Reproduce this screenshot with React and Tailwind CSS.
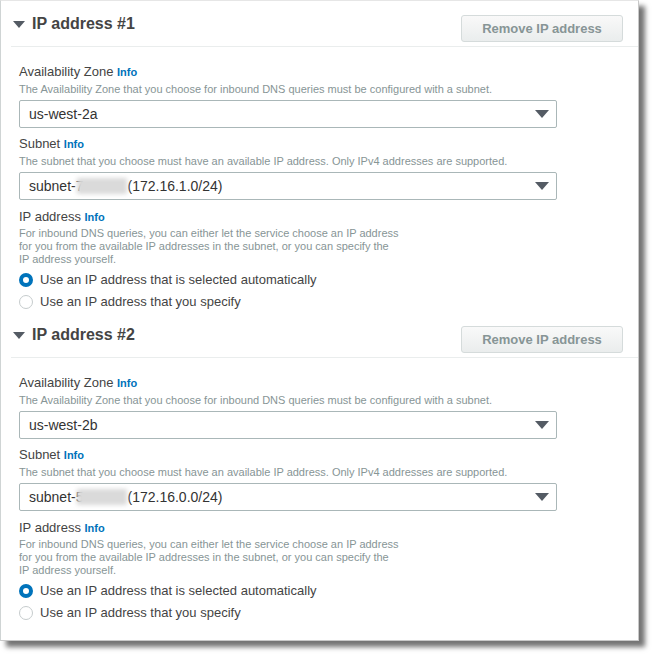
import React from "react";

const font = { fontFamily: '"Liberation Sans", Arial, sans-serif' };

function Caret({ className }) {
  return (
    <svg width="14" height="8" viewBox="0 0 14 8" className={className}>
      <path d="M0 0 L14 0 L7 8 Z" fill="#545b64" />
    </svg>
  );
}

function Radio({ checked, label }) {
  return (
    <div className="flex items-center h-[22px]">
      {checked ? (
        <span className="w-[14px] h-[14px] rounded-full border-[4px] border-[#0073bb] bg-white box-border" />
      ) : (
        <span className="w-[14px] h-[14px] rounded-full border border-[#c6cccd] bg-white box-border" />
      )}
      <span className="ml-[7px] text-[13px] text-[#444]">{label}</span>
    </div>
  );
}

function Label({ text }) {
  return (
    <div className="text-[13px] leading-[16px] text-[#444]">
      {text} <span className="text-[11px] font-bold text-[#0073bb]">Info</span>
    </div>
  );
}

function Desc({ children }) {
  return <div className="text-[11px] leading-[13px] text-[#879596]">{children}</div>;
}

function Select({ children }) {
  return (
    <div className="w-[538px] h-[28px] border border-[#aab7b8] rounded-[2px] flex items-center justify-between pl-[9px] pr-[7px] bg-white">
      <span className="text-[14px] text-[#333] flex items-center">{children}</span>
      <Caret />
    </div>
  );
}

function Section({ n, az, subnetPrefix, cidr, first }) {
  return (
    <div>
      <div className={"flex items-start justify-between pl-[12px] pr-[15px] " + (first ? "pt-[14px]" : "pt-[13px]")}>
        <div className="flex items-center h-[18px]">
          <svg width="12" height="7" viewBox="0 0 12 7">
            <path d="M0 0 L12 0 L6 7 Z" fill="#545b64" />
          </svg>
          <span className="ml-[7px] text-[16px] leading-[18px] font-bold text-[#444]">IP address #{n}</span>
        </div>
        <div className="w-[162px] h-[27px] rounded-[3px] border border-[#d5dbdb] bg-gradient-to-b from-[#f9f9f9] to-[#eaeded] flex items-center justify-center text-[13px] font-bold text-[#879596]">
          Remove IP address
        </div>
      </div>
      <div className="ml-[10px] mt-[4px] border-t border-[#eaeded]" />
      <div className="pl-[18px] pt-[17px]">
        <Label text="Availability Zone" />
        <div className="mt-[3px]">
          <Desc>The Availability Zone that you choose for inbound DNS queries must be configured with a subnet.</Desc>
        </div>
        <div className="mt-[4px]">
          <Select>{az}</Select>
        </div>
        <div className="mt-[8px]">
          <Label text="Subnet" />
        </div>
        <div className="mt-[3px]">
          <Desc>The subnet that you choose must have an available IP address. Only IPv4 addresses are supported.</Desc>
        </div>
        <div className="mt-[4px]">
          <Select>
            <span>{subnetPrefix}</span>
            <span className="inline-block w-[50px] h-[16px] -ml-[6px] bg-[#dadada] blur-[2px]" />
            <span>{cidr}</span>
          </Select>
        </div>
        <div className="mt-[9px]">
          <Label text="IP address" />
        </div>
        <div className="mt-[2px]">
          <Desc>
            <div>For inbound DNS queries, you can either let the service choose an IP address</div>
            <div>for you from the available IP addresses in the subnet, or you can specify the</div>
            <div>IP address yourself.</div>
          </Desc>
        </div>
        <div className="mt-[3px]">
          <Radio checked label="Use an IP address that is selected automatically" />
          <Radio label="Use an IP address that you specify" />
        </div>
      </div>
    </div>
  );
}

export default function App() {
  return (
    <div className="w-[654px] h-[656px] bg-white" style={font}>
      <div className="w-[639px] h-[641px] bg-white border-l border-r border-b border-t border-l-[#cfd4d4] border-r-[#c8c8c8] border-b-[#c8c8c8] border-t-[#e6e6e6] shadow-[6px_6px_5px_rgba(0,0,0,0.55)] box-border">
        <Section first n={1} az="us-west-2a" subnetPrefix="subnet-7" cidr="(172.16.1.0/24)" />
        <Section n={2} az="us-west-2b" subnetPrefix="subnet-5" cidr="(172.16.0.0/24)" />
      </div>
    </div>
  );
}
